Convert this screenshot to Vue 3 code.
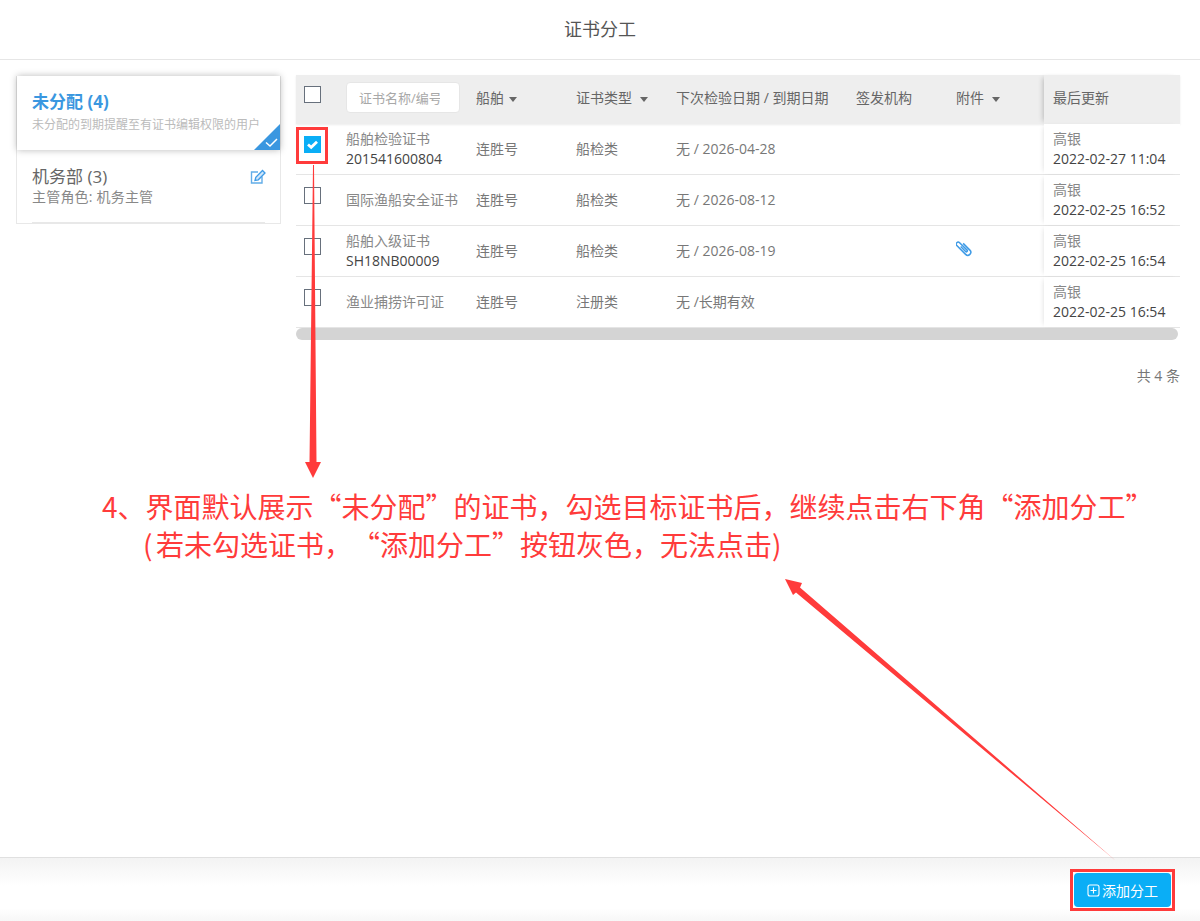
<script setup>
const rows = [
  { name: '船舶检验证书', code: '201541600804', type: '船检类', date: '无 / 2026-04-28', user: '高银', time: '2022-02-27 11:04', checked: true },
  { name: '国际渔船安全证书', code: '', type: '船检类', date: '无 / 2026-08-12', user: '高银', time: '2022-02-25 16:52' },
  { name: '船舶入级证书', code: 'SH18NB00009', type: '船检类', date: '无 / 2026-08-19', user: '高银', time: '2022-02-25 16:54', clip: true },
  { name: '渔业捕捞许可证', code: '', type: '注册类', date: '无 /长期有效', user: '高银', time: '2022-02-25 16:54' }
]
</script>

<template>
  <div class="page">
    <header class="top">证书分工</header>
    <main class="main">
      <aside class="side">
        <div class="card active">
          <div class="card-title">未分配 (4)</div>
          <div class="card-sub">未分配的到期提醒至有证书编辑权限的用户</div>
          <svg class="corner" width="26" height="26" viewBox="0 0 26 26">
            <polygon points="26,0 26,26 0,26" fill="#3a97e0" />
            <path d="M12 18.500l4 3.500 7-7" fill="none" stroke="#fff" stroke-width="1.500" />
          </svg>
        </div>
        <div class="card plain">
          <div class="plain-head">
            <span class="plain-title">机务部 (3)</span>
            <svg class="edit" width="16" height="16" viewBox="0 0 16 16">
              <path d="M8 4H1.500v11H12V8.500" fill="none" stroke="#62ade8" stroke-width="1.400" />
              <path d="M5 12.500l.8-3.200L12.500 2.500 15 5l-6.700 6.800z" fill="#cfe6fa" stroke="#3f9be6" stroke-width="1.300" />
            </svg>
          </div>
          <div class="plain-sub">主管角色: 机务主管</div>
        </div>
      </aside>
      <section class="content">
        <div class="table">
          <div class="row head">
            <div class="c-check"><span class="box"></span></div>
            <div class="c-name"><div class="search"><span class="ph">证书名称/编号</span></div></div>
            <div class="c-ship">船舶<i class="caret"></i></div>
            <div class="c-type">证书类型<i class="caret wide"></i></div>
            <div class="c-date">下次检验日期 / 到期日期</div>
            <div class="c-org">签发机构</div>
            <div class="c-att">附件<i class="caret wide"></i></div>
            <div class="c-last">最后更新</div>
          </div>
          <div v-for="r in rows" :key="r.name" class="row body">
            <div class="c-check"><span class="box" :class="{ on: r.checked }">
              <svg v-if="r.checked" width="17" height="17" viewBox="0 0 17 17">
                <path d="M4 8.500l3.200 2.800 5.800-5.600" fill="none" stroke="#fff" stroke-width="2.800" />
              </svg>
            </span></div>
            <div class="c-name name-cell">
              <div class="name">{{ r.name }}</div>
              <div v-if="r.code" class="code">{{ r.code }}</div>
            </div>
            <div class="c-ship single">连胜号</div>
            <div class="c-type single">{{ r.type }}</div>
            <div class="c-date single">{{ r.date }}</div>
            <div class="c-org"></div>
            <div class="c-att">
              <svg v-if="r.clip" class="clip" width="16" height="17" viewBox="0 0 16 17">
                <g transform="translate(7.500 8) rotate(-45)">
                  <path d="M3-3.500V6a3 3 0 0 1-6 0V-6.500a2 2 0 0 1 4 0V4a1 1 0 0 1-2 0V-3" fill="none" stroke="#3f9be6" stroke-width="1.500" />
                </g>
              </svg>
            </div>
            <div class="c-last">
              <div class="user">{{ r.user }}</div>
              <div class="time">{{ r.time }}</div>
            </div>
          </div>
        </div>
        <div class="scrollbar"></div>
        <div class="total">共 4 条</div>
      </section>
    </main>
    <footer class="foot">
      <button class="add">
        <svg width="13" height="13" viewBox="0 0 13 13">
          <rect x="1" y="1" width="11" height="11" rx="2" fill="none" stroke="#fff" stroke-width="1.100" />
          <path d="M3.500 6.500h6M6.500 3.500v6" stroke="#fff" stroke-width="1.100" />
        </svg>
        添加分工
      </button>
    </footer>

    <svg class="marks" width="1200" height="921" viewBox="0 0 1200 921">
      <rect x="297.500" y="128.500" width="29" height="34" fill="none" stroke="#ff3b3b" stroke-width="3" />
      <rect x="1071.500" y="870.500" width="102" height="39" fill="none" stroke="#ff3b3b" stroke-width="3" />
      <polygon points="313,165 314,165 316.500,462 321,462 313,478 305,462 309.500,462" fill="#ff3b3b" />
      <polygon points="785,579 802,583 800,587.500 1116,861 796,592.500 793,595" fill="#ff3b3b" />
    </svg>
    <div class="note">
      <div>4、界面默认展示“未分配”的证书，勾选目标证书后，继续点击右下角“添加分工”</div>
      <div class="note-2"><span class="paren">(</span>若未勾选证书，“添加分工”按钮灰色，无法点击)</div>
    </div>
  </div>
</template>

<style scoped>
.page {
  position: relative;
  width: 1200px;
  height: 921px;
  display: flex;
  flex-direction: column;
  overflow: hidden;
  background: #fff;
  font-family: "Open Sans", "Noto Sans CJK SC", sans-serif;
  font-size: 14px;
  color: #777;
}
.top {
  height: 59px;
  box-sizing: content-box;
  border-bottom: 1px solid #e6e6e6;
  display: flex;
  align-items: center;
  justify-content: center;
  font-size: 18px;
  color: #555;
  flex: none;
  padding-bottom: 0;
  line-height: 57px;
}
.main {
  flex: 1;
  display: flex;
  gap: 15px;
  padding: 15px 20px 0 16px;
  min-height: 0;
}
.side {
  width: 265px;
  height: 148px;
  flex: none;
  border: 1px solid #e8e8e8;
  border-top: 0;
  box-sizing: border-box;
  margin-top: 1px;
}
.card.active {
  position: relative;
  height: 74px;
  margin: 0;
  padding: 15px 15px 0 15px;
  box-sizing: border-box;
  background: #fff;
  box-shadow: 0 0 7px rgba(0, 0, 0, .28);
}
.card-title {
  font-size: 17px;
  line-height: 22px;
  font-weight: 700;
  color: #3a97e0;
}
.card-sub {
  font-size: 12px;
  line-height: 16px;
  margin-top: 4px;
  color: #bbb;
  white-space: nowrap;
}
.corner {
  position: absolute;
  right: 0;
  bottom: 0;
}
.card.plain {
  margin: 0 15px;
  height: 73px;
  box-sizing: border-box;
  padding-top: 15px;
  border-bottom: 1px solid #e8e8e8;
}
.plain-head {
  display: flex;
  align-items: center;
  justify-content: space-between;
  height: 20px;
}
.plain-title {
  font-size: 17px;
  color: #666;
}
.edit {
  margin-right: -1px;
  margin-top: 2px;
}
.plain-sub {
  font-size: 14px;
  line-height: 20px;
  margin-top: 2px;
  color: #888;
  letter-spacing: .2px;
}
.content {
  width: 884px;
  flex: none;
}
.row {
  display: grid;
  grid-template-columns: 50px 130px 100px 100px 180px 100px 88px 136px;
  align-items: center;
}
.head {
  height: 49px;
  box-sizing: border-box;
  padding-bottom: 5px;
  background: #eee;
  color: #666;
  box-shadow: 0 1px 2px rgba(0, 0, 0, .08);
}
.head .box {
  margin-bottom: 5px;
}
.body {
  height: 51px;
  box-sizing: border-box;
  border-bottom: 1px solid #e5e5e5;
}
.single {
  padding-bottom: 2px;
}
.row > .c-last {
  align-self: stretch;
  display: flex;
  flex-direction: column;
  justify-content: center;
  padding-left: 9px;
  box-shadow: -3px 0 5px -3px rgba(0, 0, 0, .14);
  background: #fff;
}
.head > .c-last {
  margin-bottom: -5px;
  padding-bottom: 5px;
  background: #eee;
  box-shadow: -4px 0 5px -3px rgba(0, 0, 0, .22);
}
.box {
  display: block;
  width: 15px;
  height: 15px;
  margin-left: 8px;
  margin-bottom: 9px;
  border: 1px solid #67707c;
  background: #fff;
}
.box.on {
  width: 17px;
  height: 17px;
  border: 0;
  background: #0aaef6;
}
.box svg {
  display: block;
}
.search {
  width: 114px;
  height: 31px;
  box-sizing: border-box;
  padding: 0 0 0 12px;
  background: #fff;
  border-radius: 4px;
  border: 1px solid #e6e6e6;
  font-size: 13px;
  line-height: 30px;
  color: #a8a8a8;
  white-space: nowrap;
}
.ph {
  display: block;
  width: 81px;
  overflow: hidden;
}
.caret {
  display: inline-block;
  margin-left: 5px;
  border: 4px solid transparent;
  border-top: 5px solid #666;
  border-bottom: 0;
  vertical-align: middle;
}
.caret.wide {
  margin-left: 8px;
}
.name-cell {
  line-height: 20px;
}
.name {
  color: #888;
  white-space: nowrap;
}
.code,
.time {
  color: #444;
  line-height: 20px;
  white-space: nowrap;
}
.user {
  font-size: 14px;
  line-height: 20px;
  color: #888;
}
.clip {
  display: block;
  margin-bottom: 5px;
}
.scrollbar {
  height: 12px;
  width: 882px;
  border-radius: 6px;
  background: #d4d4d4;
}
.total {
  margin-top: 27px;
  text-align: right;
  color: #777;
  line-height: 18px;
}
.foot {
  height: 64px;
  flex: none;
  box-sizing: border-box;
  border-top: 1px solid #e0e0e0;
  background: linear-gradient(#f3f3f3, #fff 45%, #fff 80%, #f7f7f7);
  display: flex;
  justify-content: flex-end;
  align-items: flex-start;
  padding: 15px 29px 0 0;
}
.add {
  width: 97px;
  height: 34px;
  border: 0;
  border-radius: 4px;
  background: #0aaef6;
  color: #fff;
  font-family: inherit;
  font-size: 14px;
  display: flex;
  align-items: center;
  justify-content: center;
  gap: 2px;
  padding: 0;
}
.marks {
  position: absolute;
  inset: 0;
  pointer-events: none;
}
.note {
  position: absolute;
  left: 102px;
  top: 487px;
  font-family: "Noto Sans CJK SC", sans-serif;
  font-size: 28px;
  line-height: 38px;
  color: #ff3b3b;
  white-space: nowrap;
  text-spacing-trim: space-all;
}
.note-2 {
  margin-left: 41px;
}
.paren {
  margin-right: 3.500px;
}
</style>
